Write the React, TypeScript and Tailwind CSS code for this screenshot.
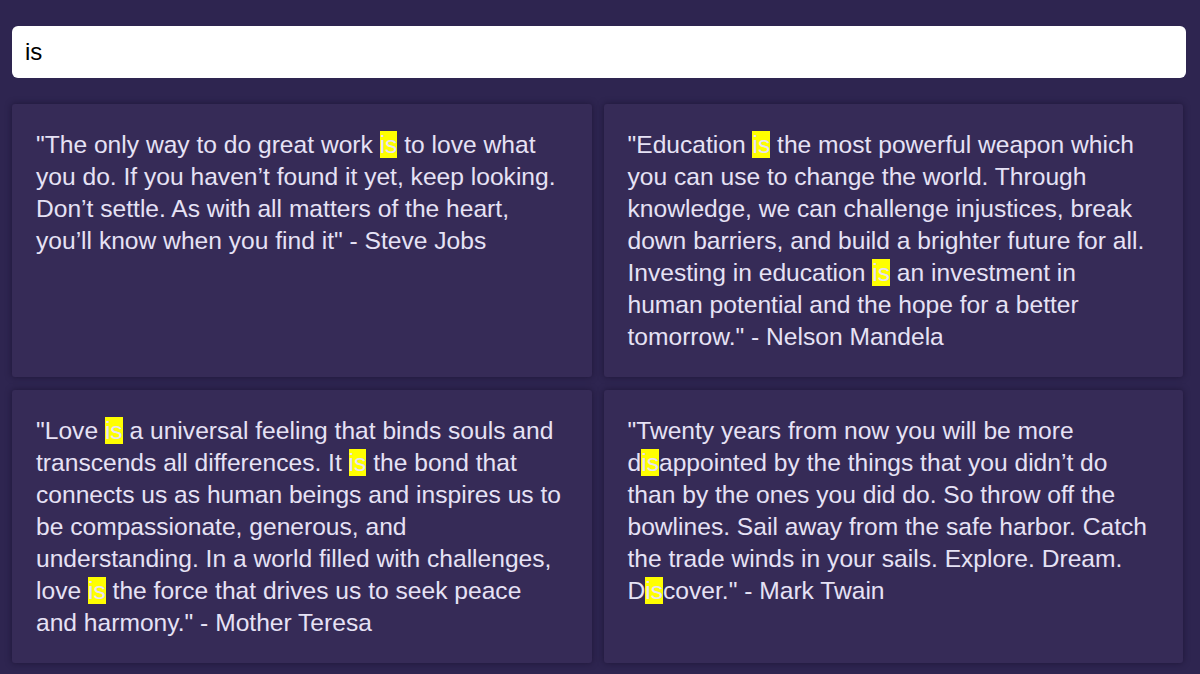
import React from "react";

const quotes = [
  "\"The only way to do great work is to love what you do. If you haven’t found it yet, keep looking. Don’t settle. As with all matters of the heart, you’ll know when you find it\" - Steve Jobs",
  "\"Education is the most powerful weapon which you can use to change the world. Through knowledge, we can challenge injustices, break down barriers, and build a brighter future for all. Investing in education is an investment in human potential and the hope for a better tomorrow.\" - Nelson Mandela",
  "\"Love is a universal feeling that binds souls and transcends all differences. It is the bond that connects us as human beings and inspires us to be compassionate, generous, and understanding. In a world filled with challenges, love is the force that drives us to seek peace and harmony.\" - Mother Teresa",
  "\"Twenty years from now you will be more disappointed by the things that you didn’t do than by the ones you did do. So throw off the bowlines. Sail away from the safe harbor. Catch the trade winds in your sails. Explore. Dream. Discover.\" - Mark Twain",
];

function highlight(text: string, q: string) {
  const parts = text.split(q);
  const out: React.ReactNode[] = [];
  parts.forEach((p, i) => {
    out.push(<React.Fragment key={"t" + i}>{p}</React.Fragment>);
    if (i < parts.length - 1)
      out.push(
        <mark key={"m" + i} className="bg-[#ffff00] text-[#e6e2f5]">
          {q}
        </mark>
      );
  });
  return out;
}

export default function App() {
  const q = "is";
  return (
    <div
      className="min-h-[674px] w-full bg-[#2e2550] px-3 pt-[26px] pb-3"
      style={{ fontFamily: '"Liberation Sans", Arial, sans-serif' }}
    >
      <div className="mr-[2px] flex h-[52px] items-center rounded-md bg-white pl-[13px] text-[24px] text-black">
        {q}
      </div>
      <div className="mt-[26px] grid grid-cols-2 gap-x-3 gap-y-[13px] pr-[5px]">
        {quotes.map((t, i) => (
          <div
            key={i}
            className="h-[273px] rounded-[3px] bg-[#362b57] pt-[25px] pb-6 pl-6 pr-[27px] text-[24.6px] leading-[32px] text-[#e6e2f5] shadow-[0_0_6px_rgba(20,12,40,0.6)]"
          >
            {highlight(t, q)}
          </div>
        ))}
      </div>
    </div>
  );
}
